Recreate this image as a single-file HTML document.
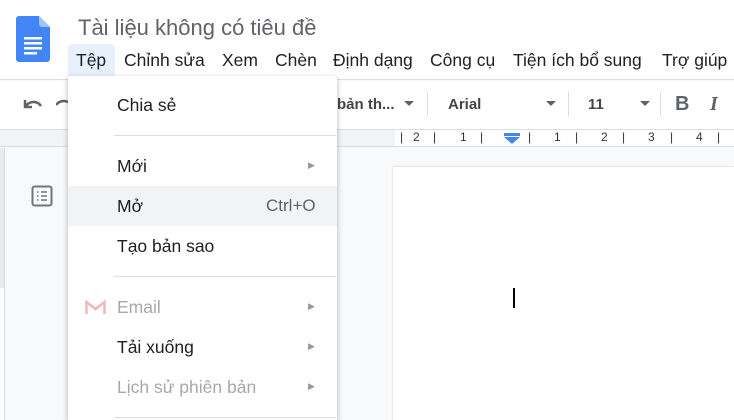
<!DOCTYPE html>
<html><head><meta charset="utf-8"><style>
*{margin:0;padding:0;box-sizing:border-box}
body{width:734px;height:420px;overflow:hidden;background:#f8f9fa;font-family:"Liberation Sans",Arial,sans-serif;position:relative;color:#202124}
.abs{position:absolute}
.mi{position:absolute;left:117px;font-size:17.5px;color:#202124}
.arr{position:absolute;left:308px;font-size:9px;color:#999}
.sep{position:absolute;left:114px;width:222px;height:1px;background:#dadce0}
</style></head><body>
<div class="abs" style="left:0;top:0;width:734px;height:80px;background:#fff;border-bottom:1px solid #dadce0"></div>
<svg class="abs" style="left:16px;top:16px" width="34" height="46" viewBox="0 0 34 46">
<path d="M3 0H23L34 11V43A3 3 0 0 1 31 46H3A3 3 0 0 1 0 43V3A3 3 0 0 1 3 0Z" fill="#4285f4"/>
<path d="M23 0L34 11H26A3 3 0 0 1 23 8Z" fill="#a1c2fa"/>
<rect x="8" y="21" width="18" height="2.5" fill="#fff"/><rect x="8" y="26" width="18" height="2.5" fill="#fff"/><rect x="8" y="31" width="18" height="2.5" fill="#fff"/><rect x="8" y="36" width="13" height="2.5" fill="#fff"/>
</svg>
<div class="abs" style="left:78px;top:15px;font-size:22px;color:#5f6368">Tài liệu không có tiêu đề</div>
<div class="abs" style="left:68px;top:44px;width:47px;height:33px;background:#e8f0fe;border-radius:4px 4px 0 0"></div>
<div class="abs" style="left:0;top:50px;font-size:17.5px;white-space:nowrap">
<span class="abs" style="left:76px">Tệp</span><span class="abs" style="left:124px">Chỉnh sửa</span><span class="abs" style="left:222px">Xem</span><span class="abs" style="left:275px">Chèn</span><span class="abs" style="left:333px">Định dạng</span><span class="abs" style="left:430px">Công cụ</span><span class="abs" style="left:513px">Tiện ích bổ sung</span><span class="abs" style="left:662px">Trợ giúp</span></div>
<div class="abs" style="left:0;top:81px;width:734px;height:48px;background:#fff"></div>
<svg class="abs" style="left:22px;top:96px" width="22" height="16" viewBox="0 0 22 16"><path d="M3 4V11H10M3 11C7 5 15 4 19 10" fill="none" stroke="#5f6368" stroke-width="2.5"/></svg>
<svg class="abs" style="left:56px;top:96px" width="12" height="16" viewBox="0 0 12 16"><path d="M0 9C3 5 8 4 12 6" fill="none" stroke="#5f6368" stroke-width="2.5"/></svg>
<div class="abs" style="left:337px;top:96px;font-size:15px;color:#444;font-weight:bold">bản th...</div>
<div class="abs" style="left:404px;top:101px;border:5px solid transparent;border-top-color:#5f6368"></div>
<div class="abs" style="left:427px;top:92px;width:1px;height:24px;background:#dadce0"></div>
<div class="abs" style="left:448px;top:96px;font-size:15px;color:#444;font-weight:bold">Arial</div>
<div class="abs" style="left:546px;top:101px;border:5px solid transparent;border-top-color:#5f6368"></div>
<div class="abs" style="left:568px;top:92px;width:1px;height:24px;background:#dadce0"></div>
<div class="abs" style="left:588px;top:96px;font-size:15px;color:#444;font-weight:bold">11</div>
<div class="abs" style="left:640px;top:101px;border:5px solid transparent;border-top-color:#5f6368"></div>
<div class="abs" style="left:660px;top:92px;width:1px;height:24px;background:#dadce0"></div>
<div class="abs" style="left:675px;top:93px;font-size:20px;color:#5f6368;font-weight:bold">B</div>
<div class="abs" style="left:710px;top:93px;font-size:20px;color:#5f6368;font-weight:bold;font-style:italic;font-family:'Liberation Serif',serif">I</div>
<div class="abs" style="left:0;top:129px;width:734px;height:18px;background:#f1f3f4;border-top:1px solid #dadce0;border-bottom:1px solid #dadce0"></div>
<div class="abs" style="left:395px;top:130px;width:339px;height:16px;background:#fff"></div>
<div class="abs" style="left:395px;top:130px;font-size:12px;color:#333;white-space:nowrap">
<span class="abs" style="left:5px">|</span><span class="abs" style="left:18px">2</span><span class="abs" style="left:38px">|</span><span class="abs" style="left:65px">1</span><span class="abs" style="left:85px">|</span><span class="abs" style="left:133px">|</span><span class="abs" style="left:159px">1</span><span class="abs" style="left:180px">|</span><span class="abs" style="left:206px">2</span><span class="abs" style="left:227px">|</span><span class="abs" style="left:253px">3</span><span class="abs" style="left:275px">|</span><span class="abs" style="left:301px">4</span><span class="abs" style="left:322px">|</span></div>
<div class="abs" style="left:504px;top:133px;width:16px;height:3px;background:#4285f4"></div>
<div class="abs" style="left:504px;top:137px;border-left:8px solid transparent;border-right:8px solid transparent;border-top:7px solid #4285f4"></div>
<div class="abs" style="left:0;top:148px;width:5px;height:140px;background:#e8eaed;border-right:1px solid #dadce0"></div>
<div class="abs" style="left:0;top:288px;width:5px;height:132px;background:#fff;border-right:1px solid #dadce0"></div>
<svg class="abs" style="left:31px;top:185px" width="22" height="22" viewBox="0 0 22 22"><rect x="1.5" y="1.5" width="19" height="19" rx="2" fill="none" stroke="#757575" stroke-width="2"/><path d="M6 7H7.5M10 7H16M6 11H7.5M10 11H16M6 15H7.5M10 15H16" stroke="#757575" stroke-width="1.6"/></svg>
<div class="abs" style="left:393px;top:167px;width:341px;height:253px;background:#fff;box-shadow:0 0 2px rgba(0,0,0,.2)"></div>
<div class="abs" style="left:513px;top:288px;width:1.5px;height:20px;background:#000"></div>
<div class="abs" style="left:68px;top:76px;width:269px;height:344px;background:#fff;box-shadow:0 2px 6px rgba(0,0,0,.3);border-radius:0 4px 0 0"></div>
<div class="mi" style="top:95px">Chia sẻ</div>
<div class="sep" style="top:135px"></div>
<div class="mi" style="top:156px">Mới</div><div class="arr" style="top:160px">▶</div>
<div class="abs" style="left:68px;top:186px;width:269px;height:40px;background:#f1f3f4"></div>
<div class="mi" style="top:196px">Mở</div><div class="abs" style="left:266px;top:196px;font-size:17px;color:#5f6368">Ctrl+O</div>
<div class="mi" style="top:236px">Tạo bản sao</div>
<div class="sep" style="top:276px"></div>
<svg class="abs" style="left:85px;top:300px" width="21" height="14" viewBox="0 0 21 14"><path d="M1.5 14V2L10.5 9L19.5 2V14" fill="none" stroke="#f2b8b5" stroke-width="2.5"/></svg>
<div class="mi" style="top:297px;color:#a8a8a8">Email</div><div class="arr" style="top:301px">▶</div>
<div class="mi" style="top:337px">Tải xuống</div><div class="arr" style="top:341px">▶</div>
<div class="mi" style="top:377px;color:#a8a8a8">Lịch sử phiên bản</div><div class="arr" style="top:381px">▶</div>
<div class="sep" style="top:417px"></div>
</body></html>
